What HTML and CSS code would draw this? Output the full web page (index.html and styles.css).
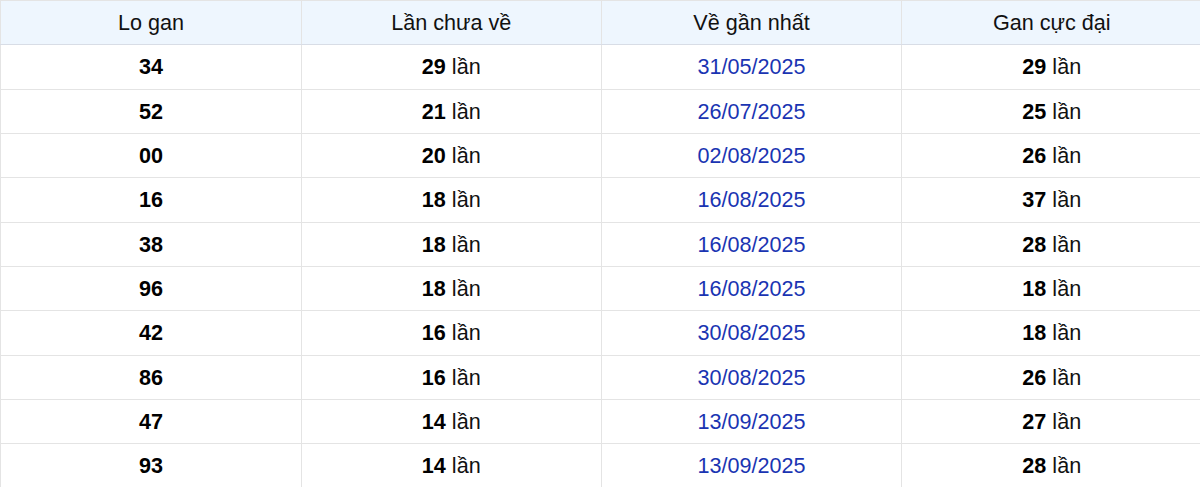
FILE: index.html
```html
<!DOCTYPE html>
<html lang="vi">
<head>
<meta charset="utf-8">
<title>Lo gan</title>
<link rel="stylesheet" href="styles.css">
</head>
<body>
<table class="gan-table">
  <thead>
    <tr><th>Lo gan</th><th>Lần chưa về</th><th>Về gần nhất</th><th>Gan cực đại</th></tr>
  </thead>
  <tbody>
    <tr><td><b>34</b></td><td><b>29</b> lần</td><td class="date">31/05/2025</td><td><b>29</b> lần</td></tr>
    <tr><td><b>52</b></td><td><b>21</b> lần</td><td class="date">26/07/2025</td><td><b>25</b> lần</td></tr>
    <tr><td><b>00</b></td><td><b>20</b> lần</td><td class="date">02/08/2025</td><td><b>26</b> lần</td></tr>
    <tr><td><b>16</b></td><td><b>18</b> lần</td><td class="date">16/08/2025</td><td><b>37</b> lần</td></tr>
    <tr><td><b>38</b></td><td><b>18</b> lần</td><td class="date">16/08/2025</td><td><b>28</b> lần</td></tr>
    <tr><td><b>96</b></td><td><b>18</b> lần</td><td class="date">16/08/2025</td><td><b>18</b> lần</td></tr>
    <tr><td><b>42</b></td><td><b>16</b> lần</td><td class="date">30/08/2025</td><td><b>18</b> lần</td></tr>
    <tr><td><b>86</b></td><td><b>16</b> lần</td><td class="date">30/08/2025</td><td><b>26</b> lần</td></tr>
    <tr><td><b>47</b></td><td><b>14</b> lần</td><td class="date">13/09/2025</td><td><b>27</b> lần</td></tr>
    <tr><td><b>93</b></td><td><b>14</b> lần</td><td class="date">13/09/2025</td><td><b>28</b> lần</td></tr>
  </tbody>
</table>
</body>
</html>
```
FILE: styles.css
```css
html, body {
  margin: 0;
  padding: 0;
  background: #ffffff;
  overflow: hidden;
}
body {
  font-family: "Liberation Sans", Arial, sans-serif;
  font-size: 21.6px;
  color: #111111;
}
.gan-table {
  border-collapse: collapse;
  table-layout: fixed;
  width: 1202px;
  margin-left: 0.4px;
}
.gan-table th,
.gan-table td {
  width: 300px;
  height: 44.35px;
  padding: 0;
  text-align: center;
  vertical-align: middle;
  border: 1.5px solid #e4e4e4;
  line-height: 1;
  box-sizing: border-box;
}
.gan-table th {
  background: #eef6fe;
  font-weight: normal;
  border-bottom-color: #d8dde6;
}
.gan-table td b {
  font-weight: bold;
  color: #000;
}
.gan-table td.date {
  color: #1a34b2;
}
```
